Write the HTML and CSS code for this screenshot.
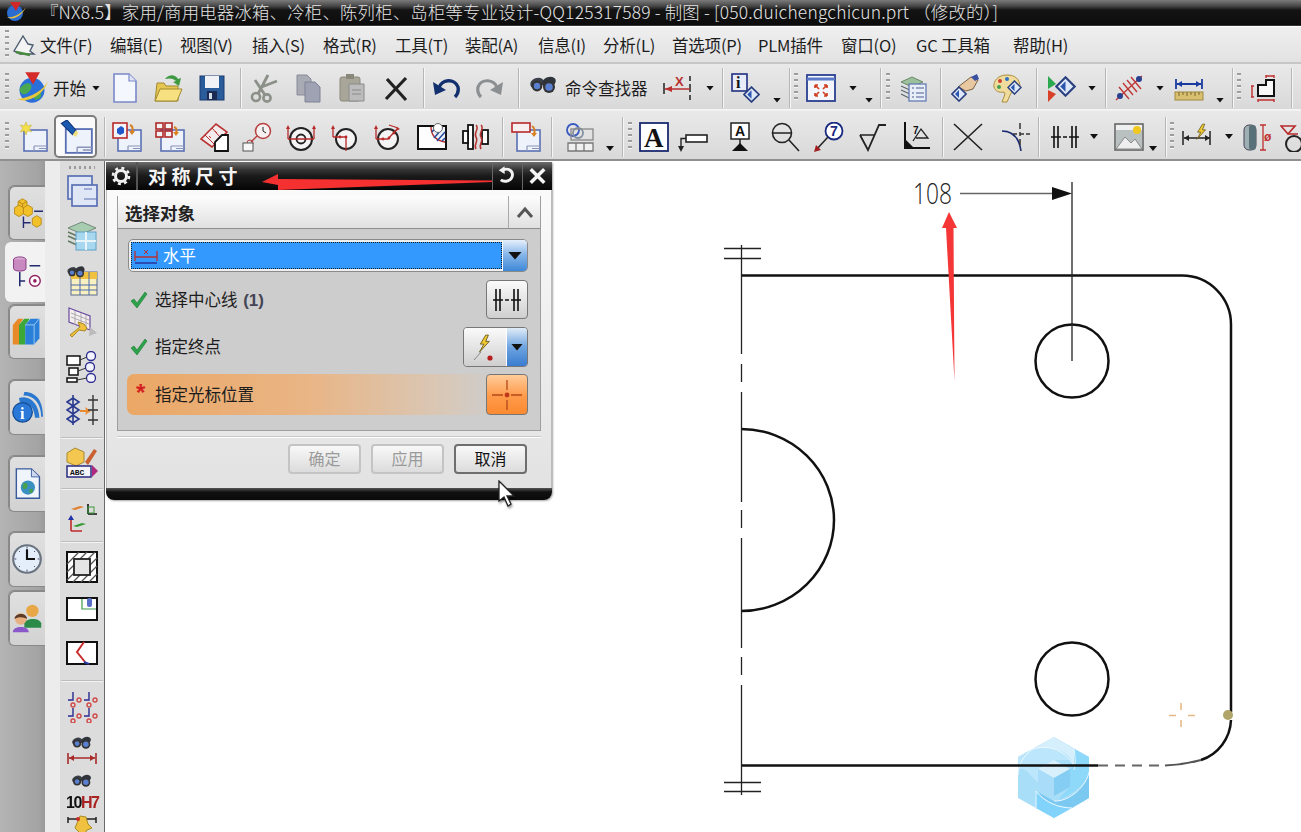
FILE: index.html
```html
<!DOCTYPE html>
<html lang="zh">
<head>
<meta charset="utf-8">
<title>NX 8.5 制图</title>
<link rel="stylesheet" href="styles.css">
</head>
<body>
<svg class="defs" width="0" height="0">
  <defs>
    <symbol id="sheet" viewBox="0 0 30 30"><rect x="6" y="8" width="23" height="21" fill="#eef2fb" stroke="#5b70b4" stroke-width="1.6"/><path d="M16 24h13M16 24v5M21 26.5h8" stroke="#8a94b8" stroke-width="1.2" fill="none"/></symbol>
    <symbol id="bino" viewBox="0 0 30 30"><ellipse cx="9" cy="10" rx="7" ry="5" fill="#3b3f4a" transform="rotate(-20 9 10)"/><ellipse cx="21" cy="9" rx="7" ry="5" fill="#2f333c" transform="rotate(-20 21 9)"/><circle cx="9" cy="13" r="5.4" fill="#333"/><circle cx="21" cy="14" r="6" fill="#333"/><circle cx="9" cy="13" r="3.2" fill="#5b7fd0"/><circle cx="21" cy="14" r="3.8" fill="#5b7fd0"/></symbol>
    <symbol id="diamond" viewBox="0 0 16 16"><path d="M8 1l7 7-7 7-7-7z" fill="#dfe8f8" stroke="#2a3f80" stroke-width="1.6"/><path d="M8 4v8L4 8z" fill="#2a56b0"/></symbol>
    <symbol id="centre" viewBox="0 0 30 30"><path d="M4 4v22M8 4v22M22 4v22M26 4v22" stroke="#111" stroke-width="1.6"/><path d="M1 15h10M13 15h4M19 15h10" stroke="#111" stroke-width="1.4"/></symbol>
    <symbol id="bolt" viewBox="0 0 20 24"><path d="M13 1L7 11h4L6 20l11-12h-4l3-7z" fill="#f0c830" stroke="#6a5a20" stroke-width="1"/></symbol>
  </defs>
</svg>

<div class="app">
  <header class="titlebar">
    <svg class="t-logo" width="24" height="22" viewBox="0 0 24 22"><circle cx="11" cy="12" r="8" fill="#2a6cd0"/><path d="M3 16c6 4 15-1 19-10-4 6-11 11-19 10z" fill="#e8c040"/><path d="M6 1h11l-5 9z" fill="#d02828"/></svg>
    <span class="t-text">『NX8.5】家用/商用电器冰箱、冷柜、陈列柜、岛柜等专业设计-QQ125317589 - 制图 - [050.duichengchicun.prt （修改的）]</span>
  </header>

  <nav class="menubar">
    <span class="grip m-5"></span>
    <svg class="m-logo" width="26" height="24" viewBox="0 0 26 24"><path d="M3 18L12 3l5 8 5 1-3 6 4 3H9z" fill="#f4f4f4" stroke="#4a5a70" stroke-width="1.4"/><path d="M5 19l14 3" stroke="#4a8a40" stroke-width="2.4"/></svg>
    <span class="mi w70">文件(F)</span><span class="mi w70">编辑(E)</span><span class="mi w72">视图(V)</span><span class="mi w71">插入(S)</span><span class="mi w72">格式(R)</span><span class="mi w70">工具(T)</span><span class="mi w73">装配(A)</span><span class="mi w65">信息(I)</span><span class="mi w69">分析(L)</span><span class="mi w86">首选项(P)</span><span class="mi w83">PLM插件</span><span class="mi w75">窗口(O)</span><span class="mi w97">GC 工具箱</span><span class="mi">帮助(H)</span>
  </nav>

  <div class="toolbar tb1">
    <span class="grip m-5"></span>
    <svg class="ic big m-6" viewBox="0 0 30 30"><circle cx="15" cy="17" r="11" fill="#2a70d8"/><path d="M8 12c4-3 8 0 6 4s-7 6-9 3 0-5 3-7zM18 20c3-2 6-1 5 2s-5 4-6 2 0-3 1-4z" fill="#4aa850"/><path d="M2 25C12 29 26 20 29 9c-4 8-14 14-27 16z" fill="#e6c63c"/><path d="M9 1h13l-6 11z" fill="#d42a2a"/></svg>
    <span class="tx w33 m-4">开始</span>
    <span class="caret m-6"></span>
    <svg class="ic m-10" viewBox="0 0 30 30"><path d="M4 1h15l7 7v21H4z" fill="#f5f7ff" stroke="#7a88c8" stroke-width="1.6"/><path d="M19 1v7h7" fill="#dfe4f6" stroke="#7a88c8" stroke-width="1.2"/></svg>
    <svg class="ic m-13" viewBox="0 0 30 30"><path d="M2 28L4 10h7l2 3h12v15z" fill="#e6c650" stroke="#a08a30"/><path d="M2 28l5-12h22l-5 12z" fill="#f6e080" stroke="#a08a30"/><path d="M12 6c4-5 10-5 13 0l3-1-2 8-6-4 3-1c-3-3-7-3-11-2z" fill="#3e9a40"/></svg>
    <svg class="ic m-14" viewBox="0 0 30 30"><rect x="3" y="3" width="24" height="24" fill="#2a5c9c" stroke="#1a3a70"/><rect x="8" y="3" width="14" height="12" fill="#f0f2f8"/><rect x="10" y="18" width="10" height="9" fill="#1a2a50"/><rect x="12" y="20" width="3" height="6" fill="#d8dcea"/></svg>
    <span class="sep m-13"></span>
    <svg class="ic m-8" viewBox="0 0 30 30"><circle cx="7" cy="24" r="4" fill="none" stroke="#8b9188" stroke-width="2.6"/><circle cx="18" cy="25" r="3.6" fill="none" stroke="#8b9188" stroke-width="2.6"/><path d="M9 21L19 2M16 22L6 7M10 15l18-7" stroke="#8b9188" stroke-width="2.8" fill="none"/></svg>
    <svg class="ic m-14" viewBox="0 0 30 30"><path d="M4 2h10l4 4v16H4z" fill="#a8aab4" stroke="#888c98"/><path d="M12 9h10l5 5v15H12z" fill="#9ea2b2" stroke="#7e8496"/></svg>
    <svg class="ic m-14" viewBox="0 0 30 30"><rect x="3" y="4" width="20" height="24" rx="2" fill="#a8a698" stroke="#8a887a"/><rect x="9" y="1" width="8" height="5" fill="#8a887a"/><path d="M12 11h15v17H12z" fill="#bcbcbc" stroke="#8a8a8a"/><path d="M15 17h9M15 21h9" stroke="#8a8a8a"/></svg>
    <svg class="ic m-14" viewBox="0 0 30 30"><path d="M6 6l19 21M25 5L5 26" stroke="#222" stroke-width="3.2"/></svg>
    <span class="sep m-12"></span>
    <svg class="ic m-7" viewBox="0 0 30 30"><path d="M8 15C10 6 24 5 27 14c1 5-1 8-3 10" fill="none" stroke="#12306e" stroke-width="3.4"/><path d="M2 9l2 13 11-5z" fill="#12306e"/></svg>
    <svg class="ic m-14" viewBox="0 0 30 30"><path d="M22 15C20 6 6 5 3 14c-1 5 1 8 3 10" fill="none" stroke="#8c8f92" stroke-width="3.2"/><path d="M28 9l-2 13-11-5z" fill="#8c8f92"/></svg>
    <span class="sep m-13"></span>
    <svg class="ic m-9"><use href="#bino"/></svg>
    <span class="tx w85 m-7">命令查找器</span>
    <svg class="ic m-12" viewBox="0 0 30 30"><path d="M28 3v5M28 11v8M28 22v5M2 10v11" stroke="#222" stroke-width="1.5"/><path d="M3 16h25" stroke="#b83030" stroke-width="1.5"/><path d="M3 16l7-3v6z" fill="#b83030"/><text class="svg-x" x="13" y="13">X</text></svg>
    <span class="caret m-14"></span>
    <span class="sep m-8"></span>
    <svg class="ic m-7" viewBox="0 0 30 30"><rect x="2" y="1" width="15" height="17" fill="#e8ecf8" stroke="#1f2f80" stroke-width="1.6"/><text class="svg-i" x="6" y="15">i</text><use href="#diamond" x="13" y="13" width="17" height="17"/></svg>
    <span class="caret low m-13"></span>
    <span class="sep m-8"></span>
    <span class="grip m-4"></span>
    <svg class="ic m-8" viewBox="0 0 30 30"><rect x="1" y="2" width="28" height="26" fill="#f4f6fc" stroke="#2a3f90" stroke-width="1.8"/><path d="M1 6h28" stroke="#5a7ac8" stroke-width="3"/><path d="M9 12l4 4M9 12v3M9 12h3M21 12l-4 4M21 12v3M21 12h-3M9 23l4-4M9 23v-3M9 23h3M21 23l-4-4M21 23v-3M21 23h-3" stroke="#d04020" stroke-width="1.7" fill="none"/></svg>
    <span class="caret m-13"></span>
    <span class="caret low m-8"></span>
    <span class="sep m-7"></span>
    <span class="grip m-5"></span>
    <svg class="ic m-8" viewBox="0 0 30 30"><path d="M3 9l11-5 11 5-11 5z" fill="#9cc09c" stroke="#6a8a6a"/><path d="M3 13l11 5M3 17l11 5M3 21l8 4" stroke="#5a6a70" stroke-width="1.3"/><rect x="11" y="11" width="17" height="17" fill="#e8eef8" stroke="#5a74b0" stroke-width="1.2"/><path d="M14 15h2M18 15h8M14 20h2M18 20h8M14 24h2M18 24h8" stroke="#4a5a90"/></svg>
    <span class="sep m-12"></span>
    <svg class="ic m-9" viewBox="0 0 30 30"><path d="M8 14L21 4l7 3-5 9-7 2z" fill="#e8c8a0" stroke="#7a6040"/><path d="M21 4l6-3 2 5-4 2z" fill="#3a50a0"/><use href="#diamond" x="1" y="13" width="16" height="16"/></svg>
    <svg class="ic m-12" viewBox="0 0 30 30"><path d="M15 2C6 2 1 8 2 14c1 4 5 6 10 5l1 2-3 8h5l4-9 9-6C28 6 23 2 15 2z" fill="#f0dc9c" stroke="#a89040"/><circle cx="8" cy="8" r="2" fill="#d04030"/><circle cx="15" cy="6" r="2" fill="#3070c0"/><circle cx="7" cy="14" r="2" fill="#40a050"/><use href="#diamond" x="15" y="7" width="15" height="15"/></svg>
    <span class="sep m-14"></span>
    <svg class="ic m-9" viewBox="0 0 30 30"><path d="M2 3l8 8-8 5z" fill="#2ca850"/><path d="M2 17l8 4-8 8z" fill="#d84028"/><use href="#diamond" x="9" y="3" width="21" height="21"/></svg>
    <span class="caret m-12"></span>
    <span class="sep m-9"></span>
    <svg class="ic m-8" viewBox="0 0 30 30"><path d="M2 27L28 3M5 14l10 12M9 10l10 12M13 7l10 12M17 4l10 12" stroke="#c03838" stroke-width="1.4"/><circle cx="25" cy="6" r="3" fill="#2a3f90"/><circle cx="6" cy="23" r="3" fill="#2a3f90"/></svg>
    <span class="caret m-12"></span>
    <svg class="ic m-10" viewBox="0 0 30 30"><path d="M2 6v10M28 6v10M3 11h24" stroke="#1a3aa0" stroke-width="1.8"/><path d="M3 11l5-3v6zM27 11l-5-3v6z" fill="#1a3aa0"/><rect x="1" y="19" width="28" height="8" fill="#d8c070" stroke="#a08a40"/><path d="M5 19v4M9 19v3M13 19v4M17 19v3M21 19v4M25 19v3" stroke="#7a6830"/></svg>
    <span class="caret low m-12"></span>
    <span class="sep m-8"></span>
    <span class="grip m-4"></span>
    <svg class="ic m-8" viewBox="0 0 30 30"><path d="M9 23V12h8V7h8v16z" fill="#f8f8f8" stroke="#111" stroke-width="2"/><path d="M3 13v11M2 13h3M2 24h3M17 3h8M17 2v3M25 2v3M9 27h16M9 26v3M25 26v3" stroke="#c03030" stroke-width="1.4"/></svg>
    <span class="sep m-12"></span>
  </div>

  <div class="toolbar tb2">
    <span class="grip m-5"></span>
    <svg class="ic m-9" viewBox="0 0 30 30"><use href="#sheet"/><path d="M8 0l1.6 4 4-1-2.4 3.4 2.4 3.4-4-1L8 13 6.4 8.8l-4 1L4.800 6.400 2.400 3l4 1z" fill="#f4e04a" stroke="#c0a830" stroke-width=".5"/></svg>
    <span class="active m-6"><svg class="ic big" viewBox="0 0 30 30"><use href="#sheet"/><path d="M2 3l5-3 8 9-3 4z" fill="#1a5ab0" stroke="#123a80"/><path d="M12 13l3-4 2 2-2 4z" fill="#f0e080"/></svg></span>
    <span class="sep m-7"></span>
    <svg class="ic m-7" viewBox="0 0 30 30"><use href="#sheet"/><rect x="1" y="1" width="14" height="15" fill="#f4f4f8" stroke="#b82a2a" stroke-width="1.6"/><path d="M5 7l4-3 3 2v5l-4 2-3-2z" fill="#1f58c8"/><path d="M18 3c3 1 3 4 2 7" stroke="#d88020" stroke-width="2" fill="none"/><path d="M17 9l6 0-3 4z" fill="#d88020"/></svg>
    <svg class="ic m-13" viewBox="0 0 30 30"><use href="#sheet"/><g fill="#f2f2f4" stroke="#b02828" stroke-width="1.6"><rect x="1" y="1" width="7" height="6"/><rect x="10" y="1" width="7" height="6"/><rect x="1" y="9" width="7" height="6"/><rect x="10" y="9" width="7" height="6"/></g><path d="M19 5c3 1 3 3 2 6" stroke="#d88020" stroke-width="2" fill="none"/><path d="M18 10h6l-3 4z" fill="#d88020"/></svg>
    <svg class="ic m-15" viewBox="0 0 30 30"><path d="M1 17L16 2l11 8-15 15z" fill="#f4ecec" stroke="#b83030" stroke-width="1.6"/><path d="M9 14l2 2M15 9l2 2M5 13l9 9M12 6l8 9" stroke="#b83030"/><path d="M15 29v-9l7-7h6v16z" fill="#fff" stroke="#111" stroke-width="1.8"/></svg>
    <svg class="ic m-12" viewBox="0 0 30 30"><circle cx="21" cy="9" r="7.5" fill="#f6f0f0" stroke="#b84040" stroke-width="1.5"/><path d="M21 5v4l3 2" stroke="#222" fill="none"/><path d="M15 14l-6 6" stroke="#b84040" stroke-width="1.4"/><circle cx="8" cy="21" r="3" fill="none" stroke="#b84040"/><rect x="1" y="21" width="10" height="8" fill="#f6f6f6" stroke="#555"/></svg>
    <svg class="ic m-14" viewBox="0 0 30 30"><circle cx="15" cy="17" r="11" fill="#f4f4f4" stroke="#222" stroke-width="2"/><circle cx="15" cy="17" r="4.500" fill="none" stroke="#222" stroke-width="1.8"/><path d="M2 17h26M2 17V5M28 17V5" stroke="#b82a2a" stroke-width="1.3" fill="none"/><path d="M2 3l2 4H0zM28 3l2 4h-4z" fill="#b82a2a"/></svg>
    <svg class="ic m-14" viewBox="0 0 30 30"><circle cx="16" cy="17" r="10" fill="#f4f4f4" stroke="#222" stroke-width="2"/><path d="M3 15h13v14M3 15V5" stroke="#b82a2a" stroke-width="1.3" fill="none"/><path d="M3 3l2 4H1z" fill="#b82a2a"/><circle cx="10" cy="15" r="1.400" fill="#b82a2a"/><circle cx="16" cy="15" r="1.400" fill="#b82a2a"/></svg>
    <svg class="ic m-13" viewBox="0 0 30 30"><circle cx="15" cy="17" r="10" fill="#f4f4f4" stroke="#222" stroke-width="2"/><path d="M3 17h12l9-10M3 17V5M16 3l9 3" stroke="#b82a2a" stroke-width="1.3" fill="none"/><path d="M3 3l2 4H1zM27 7l-4 2 1-4z" fill="#b82a2a"/><circle cx="10" cy="17" r="1.400" fill="#b82a2a"/><circle cx="16" cy="16" r="1.400" fill="#b82a2a"/><circle cx="21" cy="11" r="1.400" fill="#b82a2a"/></svg>
    <svg class="ic m-14" viewBox="0 0 30 30"><rect x="1" y="4" width="28" height="23" fill="#fdfdfd" stroke="#111" stroke-width="2"/><path d="M14 5c0 9 6 14 14 15V5z" fill="#eef2fa"/><path d="M14 5c0 9 6 14 14 15" fill="none" stroke="#b82a2a" stroke-width="1.4"/><path d="M17 16l7-8M20 19l8-9M15 10l4-5M25 19l3-3" stroke="#2a4fa0" stroke-width="1.6"/><circle cx="21" cy="6" r="4.500" fill="#fff" stroke="#666"/></svg>
    <svg class="ic m-13" viewBox="0 0 30 30"><rect x="8" y="3" width="5" height="24" fill="#fff" stroke="#111" stroke-width="1.8"/><rect x="3" y="9" width="5" height="12" fill="#fff" stroke="#111" stroke-width="1.8"/><rect x="22" y="8" width="6" height="14" fill="#fff" stroke="#111" stroke-width="1.800"/><path d="M16 3c4 4-3 8 0 12s-3 8 0 12M21 3c4 4-3 8 0 12s-3 8 0 12" stroke="#b83030" stroke-width="1.5" fill="none"/></svg>
    <span class="sep m-12"></span>
    <svg class="ic m-8" viewBox="0 0 30 30"><use href="#sheet"/><rect x="1" y="1" width="18" height="9" fill="#f6f0f0" stroke="#b82a2a" stroke-width="1.600"/><path d="M21 4c3 2 3 5 2 8" stroke="#d88020" stroke-width="2" fill="none"/><path d="M20 11h6l-3 4z" fill="#d88020"/></svg>
    <span class="sep m-10"></span>
    <svg class="ic m-13" viewBox="0 0 30 30"><circle cx="8" cy="8" r="6" fill="none" stroke="#3a5ac0" stroke-width="1.800"/><circle cx="13" cy="11" r="5" fill="none" stroke="#8090a0" stroke-width="1.800"/><rect x="6" y="7" width="22" height="11" fill="none" stroke="#888" stroke-width="1.300"/><path d="M3 21h25v8H3zM11 21v8M19 21v8" fill="#f0f0f0" stroke="#777" stroke-width="1.300"/></svg>
    <span class="caret low m-11"></span>
    <span class="sep m-8"></span>
    <span class="grip m-5"></span>
    <svg class="ic m-7" viewBox="0 0 30 30"><rect x="1" y="1" width="28" height="28" fill="#fff" stroke="#1a2a70" stroke-width="1.800"/><text class="svg-a" x="5" y="25">A</text></svg>
    <svg class="ic m-9" viewBox="0 0 30 30"><rect x="8" y="13" width="21" height="7" fill="#fff" stroke="#222" stroke-width="1.600"/><path d="M8 16.500H3V27" stroke="#222" stroke-width="1.400" fill="none"/><path d="M0 24h6l-3 6z" fill="#222"/></svg>
    <svg class="ic m-17" viewBox="0 0 30 30"><rect x="6" y="1" width="18" height="16" fill="#fff" stroke="#222" stroke-width="1.500"/><text class="svg-sm" x="10" y="14">A</text><path d="M15 17v5" stroke="#222" stroke-width="1.500"/><path d="M7 29l8-8 8 8z" fill="#111"/></svg>
    <svg class="ic m-15" viewBox="0 0 30 30"><circle cx="12" cy="11" r="9.500" fill="none" stroke="#222" stroke-width="1.600"/><path d="M3 11h18M19 18l10 11" stroke="#222" stroke-width="1.600"/></svg>
    <svg class="ic m-14" viewBox="0 0 30 30"><circle cx="20" cy="9" r="8.500" fill="#fff" stroke="#1a2a80" stroke-width="1.800"/><text class="svg-7" x="16" y="14">7</text><path d="M14 15L2 28" stroke="#222" stroke-width="1.500"/><path d="M0 30l2-7 5 5z" fill="#a02020"/></svg>
    <svg class="ic m-13" viewBox="0 0 30 30"><path d="M3 13l8 15L22 3h7" fill="none" stroke="#222" stroke-width="1.800"/><path d="M3 13h15" stroke="#222" stroke-width="1.500"/></svg>
    <svg class="ic m-14" viewBox="0 0 30 30"><path d="M4 0v26h25" fill="none" stroke="#111" stroke-width="2"/><path d="M12 19L20 7l7 9H15" fill="none" stroke="#222" stroke-width="1.300"/><path d="M4 26V17l9 9z" fill="#111"/><text class="svg-t" x="12" y="12">7</text></svg>
    <span class="sep m-11"></span>
    <svg class="ic m-10" viewBox="0 0 30 30"><path d="M1 2l28 26M29 2L1 28" stroke="#222" stroke-width="1.600"/></svg>
    <svg class="ic m-18" viewBox="0 0 30 30"><path d="M1 9c10 0 17 6 19 20" fill="none" stroke="#1a2a70" stroke-width="1.600"/><path d="M19 1v6M19 10v4M19 17v6M12 12h4M19 12h4M25 12h4" stroke="#333" stroke-width="1.500"/></svg>
    <span class="sep m-7"></span>
    <svg class="ic m-11"><use href="#centre"/></svg>
    <span class="caret m-10"></span>
    <svg class="ic m-16" viewBox="0 0 30 30"><rect x="1" y="2" width="28" height="26" fill="#eef0f0" stroke="#666" stroke-width="1.600"/><path d="M2 8h26v19H2z" fill="#b8c0c0"/><path d="M2 27l9-12 6 6 4-4 7 10z" fill="#eee" stroke="#888"/><circle cx="23" cy="8" r="4" fill="#f0c820"/></svg>
    <span class="caret low m-5"></span>
    <span class="sep m-8"></span>
    <span class="grip m-4"></span>
    <svg class="ic m-8" viewBox="0 0 30 30"><path d="M1 9v14M28 9v14M2 16h26" stroke="#222" stroke-width="1.500"/><path d="M2 16l5-3v6zM28 16l-5-3v6z" fill="#222"/><use href="#bolt" x="10" y="0" width="16" height="22"/></svg>
    <span class="caret m-13"></span>
    <svg class="ic m-9" viewBox="0 0 30 30"><rect x="2" y="3" width="12" height="25" rx="5" fill="#9fb0b4" stroke="#445"/><rect x="7" y="3" width="7" height="25" rx="3" fill="#5a7078"/><path d="M18 3h6M21 3v25M18 28h6" stroke="#c03030" stroke-width="1.300"/><text class="svg-phi" x="22" y="19">ø</text></svg>
    <svg class="ic m-8" viewBox="0 0 30 30"><path d="M1 4h14L8 12zM8 12l10 0" fill="none" stroke="#b82a2a" stroke-width="1.600"/><circle cx="14" cy="22" r="8" fill="none" stroke="#222" stroke-width="2"/></svg>
  </div>

  <main class="work">
    <aside class="resbar">
      <div class="tab t1"><svg class="tab-ic" viewBox="0 0 36 36"><g fill="#f2c028" stroke="#b88a18"><path d="M8 5l5-3 5 3-5 3z"/><path d="M8 5v7l5 3V8zM18 5v7l-5 3V8z"/><path d="M4 12l5-3 5 3v7l-5 3-5-3z"/><path d="M14 12l5-3 5 3v7l-5 3-5-3z"/><path d="M24 24l5-3 5 3v7l-5 3-5-3z"/></g><path d="M14 22v13M14 29h8M26 16h10" stroke="#222a70" stroke-width="1.600" fill="none"/></svg></div>
      <div class="tab t2 on"><svg class="tab-ic" viewBox="0 0 36 36"><ellipse cx="11" cy="4" rx="7" ry="3" fill="#d8a8d0" stroke="#803080"/><path d="M4 4v10c0 4 14 4 14 0V4" fill="#c888c0" stroke="#803080"/><path d="M11 18v16M11 28h6M22 11h12" stroke="#222a70" stroke-width="1.700" fill="none"/><circle cx="28" cy="28" r="6" fill="#fff" stroke="#902060" stroke-width="1.600"/><circle cx="28" cy="28" r="2" fill="#902060"/></svg></div>
      <div class="tab t3"><svg class="tab-ic" viewBox="0 0 36 36"><path d="M2 10l6-7h6l-5 7v22H2z" fill="#e88a28"/><path d="M9 10l6-7h6l-5 7v22H9z" fill="#3ca838"/><path d="M16 10l6-7h10v22l-6 7H16z" fill="#2a80d8"/><path d="M16 10h10v22M26 10l6-7" stroke="#a8d0f0" fill="none"/></svg></div>
      <div class="tab t4"><svg class="tab-ic" viewBox="0 0 36 36"><path d="M9 8c12-4 22 6 23 22h-5C26 18 20 12 10 13zM15 1c15 0 21 12 21 28h-2C34 14 26 5 14 5z" fill="#2a78d0"/><circle cx="13" cy="24" r="11" fill="#2a78d8" stroke="#124a90" stroke-width="1.400"/><text class="svg-info" x="10" y="31">i</text></svg></div>
      <div class="tab t5"><svg class="tab-ic" viewBox="0 0 36 36"><path d="M6 1h17l9 9v24H6z" fill="#f0f4fb" stroke="#3a5a9c" stroke-width="1.600"/><path d="M23 1v9h9" fill="#cfdaf0" stroke="#3a5a9c"/><circle cx="19" cy="22" r="8" fill="#3a90c0"/><path d="M14 17c4-1 6 2 4 5s-4 2-5 0zM21 24c3-1 5 0 3 3s-4 1-3-3z" fill="#48a048"/></svg></div>
      <div class="tab t6"><svg class="tab-ic" viewBox="0 0 36 36"><circle cx="18" cy="18" r="15.500" fill="#e4eefa" stroke="#6a7480" stroke-width="2.400"/><path d="M18 7v11h9" stroke="#111" stroke-width="2.400" fill="none"/><path d="M18 4v2M18 30v2M4 18h2M30 18h2M9 9l1 1M27 9l-1 1M9 27l1-1M27 27l-1-1" stroke="#335"/></svg></div>
      <div class="tab t7"><svg class="tab-ic" viewBox="0 0 36 36"><circle cx="24" cy="10" r="7" fill="#e8a848"/><path d="M15 24c1-6 17-7 19 0v5H15z" fill="#2a8a48"/><circle cx="11" cy="19" r="6.500" fill="#e8b080"/><path d="M4 19c0-7 14-8 14 0-3-2-10-3-14 0z" fill="#5a3a28"/><path d="M2 34c0-8 18-8 18 0z" fill="#8a58c8"/></svg></div>
    </aside>
    <div class="strip"></div>
    <aside class="sidetools">
      <span class="hgrip"></span>
      <svg class="sic mt-6" viewBox="0 0 32 32"><rect x="2" y="1" width="24" height="23" fill="#dfe6f6" stroke="#5a70b4" stroke-width="1.700"/><rect x="6" y="10" width="25" height="21" fill="#dfe6f6" stroke="#5a70b4" stroke-width="1.700"/><path d="M18 24h13M18 14h8" stroke="#5a70b4"/></svg>
      <svg class="sic mt-13" viewBox="0 0 32 32"><path d="M2 8l14-6 14 6-14 6z" fill="#a8ccb0" stroke="#708a78"/><path d="M2 12l9 4M2 16l9 4M2 21l9 4" stroke="#607a60" stroke-width="1.500"/><rect x="10" y="12" width="20" height="18" fill="#a8d8f0" stroke="#60a0c8"/><path d="M20 12v18M10 21h20" stroke="#e8f4fa" stroke-width="2"/></svg>
      <svg class="sic mt-12" viewBox="0 0 32 32"><rect x="5" y="8" width="26" height="23" fill="#f8f0c0" stroke="#5a6a90"/><rect x="5" y="8" width="26" height="7" fill="#f0c040"/><path d="M5 21h26M5 26h26M14 8v23M23 8v23" stroke="#4a6ab0"/><use href="#bino" x="0" y="0" width="20" height="20"/></svg>
      <svg class="sic mt-11" viewBox="0 0 32 32"><path d="M3 1l21 8v14L3 15z" fill="#f4f0f0" stroke="#6a4aa0" stroke-width="1.200"/><path d="M5 6l18 7M5 10l18 7M9 4v14M15 6v14M20 8v14" stroke="#b0a8b0"/><path d="M4 28l10-8-2-5 6 2 3 4-2 3-6-1-7 7z" fill="#f0c040" stroke="#a88a20"/><path d="M24 20l7 6-8 3z" fill="#bbb"/></svg>
      <svg class="sic mt-12" viewBox="0 0 32 32"><rect x="1" y="5" width="13" height="9" fill="#fff" stroke="#111" stroke-width="1.500"/><rect x="3" y="17" width="9" height="7" fill="#fff" stroke="#111" stroke-width="1.500"/><rect x="1" y="27" width="10" height="4" fill="#fff" stroke="#111" stroke-width="1.500"/><g fill="#f4f4ff" stroke="#2a2a90" stroke-width="1.300"><circle cx="25" cy="5" r="4.500"/><circle cx="24" cy="16" r="4.500"/><circle cx="25" cy="27" r="4.500"/></g><path d="M14 9l7-3M12 20l8-3M11 29l10-2" stroke="#333"/></svg>
      <svg class="sic mt-11" viewBox="0 0 32 32"><path d="M7 1v30M1 8l6-4 6 4-6 4zM1 16l6-4 6 4-6 4zM1 25l6-4 6 4-6 4z" fill="none" stroke="#2a3a90" stroke-width="1.600"/><path d="M14 16h6l-1-3 6 4-6 4 1-3h-6z" fill="#e88a30"/><path d="M27 1v30M22 6h10M22 16h10M22 26h10" stroke="#333" stroke-width="1.400"/></svg>
      <span class="hsep mt-11"></span>
      <svg class="sic mt-8" viewBox="0 0 32 32"><path d="M1 7l8-5 9 4v10l-8 4-9-4z" fill="#f4c850" stroke="#a88a30"/><path d="M19 16l9-13 3 2-9 14z" fill="#c86030"/><rect x="1" y="20" width="24" height="11" fill="#f4f4fa" stroke="#2a2a80" stroke-width="1.500"/><text class="svg-abc" x="4" y="29">ABC</text><path d="M26 19l6 6-6 6z" fill="#b02880"/></svg>
      <span class="hsep mt-10"></span>
      <svg class="sic mt-12" viewBox="0 0 32 32"><path d="M5 30V17M5 30h11" stroke="#c02a2a" stroke-width="1.600"/><path d="M5 14l-3 5h6z" fill="#2233aa"/><path d="M7 25l9-3 4 1-9 3z" fill="#3a9a3a"/><path d="M22 13V3M22 13h9" stroke="#111" stroke-width="1.600"/><rect x="22" y="6" width="6" height="6" fill="none" stroke="#3a9a3a"/><path d="M5 8l9-3 4 1-9 3z" fill="#e08030"/></svg>
      <span class="hsep mt-8"></span>
      <svg class="sic mt-9" viewBox="0 0 32 32"><rect x="1" y="1" width="30" height="30" fill="#fff" stroke="#111" stroke-width="2"/><path d="M1 13L13 1M1 21L21 1M1 29L29 1M7 31L31 7M15 31l16-16M23 31l8-8" stroke="#555" stroke-width="1.300"/><rect x="8" y="8" width="16" height="16" fill="#e4e4e4" stroke="#222" stroke-width="1.800"/></svg>
      <svg class="sic mt-10" viewBox="0 0 32 32"><rect x="1" y="5" width="30" height="22" fill="#fff" stroke="#111" stroke-width="2"/><path d="M16 6v10h14" stroke="#3a9a4a" fill="none" stroke-width="1.200"/><rect x="21" y="5" width="5" height="9" rx="2" fill="#5a70c8"/></svg>
      <svg class="sic mt-12" viewBox="0 0 32 32"><rect x="1" y="5" width="30" height="22" fill="#fff" stroke="#111" stroke-width="2"/><path d="M18 5l-7 10 8 10" fill="none" stroke="#c82a2a" stroke-width="2"/><path d="M18 25l5 2" stroke="#2a3aa0" stroke-width="2"/></svg>
      <span class="hsep mt-11"></span>
      <svg class="sic mt-10" viewBox="0 0 32 32"><g fill="none" stroke-width="1.400"><path d="M7 1v8H2M23 1v8h-5M7 17v8H2M23 17v8h-5" stroke="#2a2a90"/><g stroke="#d04a4a"><circle cx="13" cy="9" r="2"/><circle cx="29" cy="9" r="2"/><circle cx="13" cy="25" r="2"/><circle cx="29" cy="25" r="2"/><circle cx="7" cy="14" r="2"/><circle cx="23" cy="14" r="2"/><circle cx="7" cy="30" r="2"/><circle cx="23" cy="30" r="2"/></g></g></svg>
      <svg class="sic mt-11" viewBox="0 0 32 32"><use href="#bino" x="3" y="0" width="25" height="22"/><path d="M2 19v11M30 19v11M3 24h26" stroke="#a82a2a" stroke-width="1.600"/><path d="M3 24l5-3v6zM29 24l-5-3v6z" fill="#a82a2a"/></svg>
      <svg class="sic tall mt-8" viewBox="0 0 36 40"><use href="#bino" x="5" y="-2" width="25" height="22"/><text class="svg-10" x="2" y="34">10</text><text class="svg-h7" x="17" y="34">H7</text></svg>
      <svg class="sic" viewBox="0 0 32 32"><path d="M2 5h28M2 3v6M30 3v6" stroke="#222" stroke-width="1.500"/><path d="M9 14l5-12 6 1 2 7 4 4-5 2-4 6z" fill="#f0c040" stroke="#a88a20"/><circle cx="12" cy="5" r="2" fill="#c82a2a"/></svg>
    </aside>

    <section class="canvas">
      <svg class="drawing" viewBox="105 161 1196 671" width="1196" height="671">
        <g class="wm">
          <path d="M1054 737L1089 757V798L1054 818L1018 798V757Z" fill="#a9def9"/>
          <path d="M1054 737L1074 749V766C1070 750 1050 745 1033 749Z" fill="#d6effd"/>
          <path d="M1033 749C1045 746 1062 748 1070 760L1054 760L1038 769V783C1030 775 1024 765 1018 770V757Z" fill="#bce6fb"/>
          <path d="M1074 749L1089 757V772C1087 782 1075 794 1058 800L1070 787V769L1074 766Z" fill="#8ed8f9"/>
          <path d="M1089 772V798L1072 808C1060 808 1045 802 1036 791L1054 801C1070 800 1085 788 1089 772Z" fill="#7bc9f1"/>
          <path d="M1035 791C1045 803 1060 806 1072 808L1054 818L1036 808Z" fill="#82d3fb"/>
          <path d="M1074 749C1076 760 1075 766 1074 770M1033 749C1045 745 1065 748 1074 766M1018 775C1018 765 1024 755 1033 749M1089 772C1087 785 1070 802 1054 801M1036 791C1045 803 1060 808 1072 808M1036 791V808" fill="none" stroke="#eef9ff" stroke-width="1"/>
          <path d="M1054 760L1070 769L1054 778L1038 769Z" fill="#d8f0fc"/>
          <path d="M1054 778L1070 769V787L1054 796Z" fill="#85cdf2"/>
          <path d="M1054 778L1038 769V787L1054 796Z" fill="#a9dcf8"/>
        </g>
        <g class="thick">
          <path d="M741 275.500H1182A49 49 0 0 1 1231 325V712"/>
          <path d="M1231 720A44 44 0 0 1 1201 760"/>
          <path d="M741 765.500H1098"/>
          <circle cx="1072" cy="361" r="36.500"/>
          <circle cx="1072" cy="679" r="36.500"/>
          <path d="M741 429A93 91 0 0 1 741 611"/>
        </g>
        <path class="fade dashy" d="M1098 765.500H1165"/>
        <path class="fade" d="M1165 765.500C1180 765 1190 763 1201 760"/>
        <g class="thin">
          <path d="M741.500 245V354M741.500 364V382M741.500 392V502M741.500 510V528M741.500 538V648M741.500 657V675M741.500 685V795"/>
          <path d="M724 248.500H761M724 258.500H761M724 782.500H761M724 791.500H761"/>
          <path d="M1072 182V361"/>
        </g>
        <path class="dimline" d="M960 193.500H1054"/>
        <path d="M1052 187L1072 193.500L1052 200Z" fill="#111"/>
        <text class="dim108" x="913" y="204" textLength="39" lengthAdjust="spacingAndGlyphs">108</text>
        <path class="redarrow" d="M949 212L957 228H953.500L954.500 381L946 228H942Z"/>
        <path class="cross" d="M1181 703V710M1181 720V727M1169 715.500H1176M1188 715.500H1195"/>
        <circle cx="1228" cy="715" r="5" fill="#b0a468"/>
      </svg>
    </section>

    <div class="dialog">
      <div class="d-title">
        <svg class="d-gear" width="20" height="20" viewBox="0 0 20 20"><circle cx="10" cy="10" r="5.500" fill="none" stroke="#f0f0f0" stroke-width="3"/><circle cx="10" cy="10" r="8" fill="none" stroke="#f0f0f0" stroke-width="2.600" stroke-dasharray="3 3.300"/></svg>
        <span class="d-name">对称尺寸</span>
        <svg class="d-act" width="30" height="28" viewBox="0 0 30 28"><path d="M10 8c6-3 11 1 10 6s-8 7-12 4" fill="none" stroke="#f2f2f2" stroke-width="3"/><path d="M12 4v8l-6-4z" fill="#f2f2f2"/></svg>
        <svg class="d-act" width="30" height="28" viewBox="0 0 30 28"><path d="M8 7l14 14M22 7L8 21" stroke="#f4f4f4" stroke-width="3.600"/></svg>
        <svg class="d-arrow" width="232" height="16" viewBox="0 0 232 16"><path d="M0 8L16 0V5L230 6.500V8L16 16V11Z" fill="#f43030"/></svg>
      </div>
      <div class="d-main">
        <section class="panel">
          <div class="p-head"><span class="p-title">选择对象</span><span class="p-fold"><svg width="18" height="12" viewBox="0 0 18 12"><path d="M2 11l7-8 7 8" fill="none" stroke="#555" stroke-width="3"/></svg></span></div>
          <div class="p-body">
            <div class="combo">
              <div class="combo-val"><svg width="24" height="18" viewBox="0 0 24 18"><path d="M1 4v10M23 4v10M1 10h22" stroke="#b83030" stroke-width="1.300"/><path d="M10 3l4 4M14 3l-4 4" stroke="#b83030"/><path d="M1 16h22" stroke="#2a3aa0" stroke-width="1.600"/></svg><span class="lift">水平</span></div>
              <div class="combo-btn"><i class="combo-caret"></i></div>
            </div>
            <div class="row r1">
              <svg class="chk" width="18" height="18" viewBox="0 0 18 18"><path d="M1 10l3-2 3 4 8-11 2 2-10 14z" fill="#2ea24a" stroke="#1a7a30" stroke-width=".6"/></svg>
              <span class="r-label">选择中心线 <b class="cnt">(1)</b></span>
              <span class="sq"><svg width="30" height="30"><use href="#centre"/></svg></span>
            </div>
            <div class="row r2">
              <svg class="chk" width="18" height="18" viewBox="0 0 18 18"><path d="M1 10l3-2 3 4 8-11 2 2-10 14z" fill="#2ea24a" stroke="#1a7a30" stroke-width=".6"/></svg>
              <span class="r-label">指定终点</span>
              <span class="split"><span class="split-a"><svg width="28" height="30" viewBox="0 0 28 30"><use href="#bolt" x="3" y="2" width="18" height="22"/><path d="M3 28L10 20" stroke="#888"/><circle cx="19" cy="26" r="2.600" fill="#b81c1c"/></svg></span><span class="split-b"><i class="combo-caret"></i></span></span>
            </div>
            <div class="row r3">
              <span class="star">*</span>
              <span class="r-label">指定光标位置</span>
              <span class="sq hot"><svg width="36" height="36" viewBox="0 0 36 36"><path d="M18 3v10M18 23v10M3 18h11M22 18h11" stroke="#b5471a" stroke-width="1.300"/><circle cx="18" cy="18" r="2.400" fill="#c0391a"/></svg></span>
            </div>
          </div>
        </section>
        <div class="d-rule"></div>
        <div class="d-foot">
          <button class="btn off">确定</button>
          <button class="btn off">应用</button>
          <button class="btn def">取消</button>
        </div>
      </div>
      <div class="d-bottom"></div>
      <svg class="pointer" width="20" height="28" viewBox="0 0 20 28"><path d="M2 1V21L7 17L11 26L14 24L10 16H17Z" fill="#fff" stroke="#222" stroke-width="1.300"/></svg>
    </div>
  </main>
</div>
</body>
</html>
```
FILE: styles.css
```css
* { box-sizing: border-box; }
html, body { margin: 0; padding: 0; background: #fff; }
body { width: 1301px; height: 832px; overflow: hidden; font-family: "Noto Sans CJK SC", "Noto Sans", sans-serif; color: #111; }
.defs { position: absolute; }
.app { width: 1301px; height: 832px; display: flex; flex-direction: column; overflow: hidden; filter: blur(.4px); }

/* title */
.titlebar { height: 26px; flex: none; display: flex; align-items: center; padding-left: 4px; padding-bottom: 2px; background: linear-gradient(#7b7b7b 0, #474747 6px, #141414 10px, #0c0c0c 100%); color: #e4e4e4; white-space: nowrap; border-bottom: 1px solid #333; }
.t-logo { flex: none; }
.t-text { font-size: 17.400px; margin-left: 13px; letter-spacing: .2px; font-weight: 300; }

/* menu */
.menubar { height: 38px; flex: none; display: flex; align-items: center; background: linear-gradient(#efefef, #e2e2e2); border-top: 1px solid #fff; border-bottom: 2px solid #c6c6c6; }
.m-logo { margin-left: 2px; flex: none; width: 26px; margin-right: 3px; }
.mi { font-size: 16.500px; color: #1c1c1c; white-space: nowrap; flex: none; letter-spacing: -.2px; }
.w65 { width: 65px; } .w69 { width: 69px; } .w70 { width: 70px; } .w71 { width: 71px; } .w72 { width: 72px; } .w73 { width: 73px; } .w75 { width: 75px; } .w83 { width: 83px; } .w86 { width: 86px; } .w97 { width: 97px; }

/* toolbars */
.toolbar { flex: none; display: flex; align-items: center; overflow: hidden; background: linear-gradient(#e9e9e9, #d9d9d9); white-space: nowrap; }
.tb1 { height: 47px; padding-top: 3px; border-bottom: 2px solid #f2f2f2; }
.tb2 { height: 50px; padding-top: 3px; border-bottom: 2px solid #8f8f8f; }
.ic { width: 30px; height: 30px; flex: none; display: block; }
.ic.big { width: 34px; height: 34px; }
.grip { flex: none; width: 4px; height: 30px; background: repeating-linear-gradient(#9c9c9c 0 2px, #f4f4f4 2px 3px, transparent 3px 6px); }
.sep { flex: none; width: 1px; height: 40px; background: #b6b6b6; box-shadow: 1px 0 0 #f6f6f6; }
.caret { flex: none; width: 8px; height: 5px; background: #111; clip-path: polygon(0 0, 100% 0, 50% 100%); }
.caret.low { margin-top: 24px; }
.tx { flex: none; font-size: 16.500px; line-height: 20px; color: #1c1c1c; }
.w33 { width: 33px; } .w85 { width: 85px; }
.active { flex: none; width: 43px; height: 43px; display: flex; align-items: center; justify-content: center; border: 2px solid #7c7c7c; border-radius: 5px; background: #fafafa; }
.m-4 { margin-left: 4px; } .m-5 { margin-left: 5px; } .m-6 { margin-left: 6px; } .m-7 { margin-left: 7px; } .m-8 { margin-left: 8px; } .m-9 { margin-left: 9px; } .m-10 { margin-left: 10px; } .m-11 { margin-left: 11px; } .m-12 { margin-left: 12px; } .m-13 { margin-left: 13px; } .m-14 { margin-left: 14px; } .m-15 { margin-left: 15px; } .m-16 { margin-left: 16px; } .m-17 { margin-left: 17px; } .m-18 { margin-left: 18px; }

/* svg labels */
.svg-x { font: 700 13px "Liberation Sans", sans-serif; fill: #b83030; }
.svg-i { font: 700 16px "Liberation Serif", serif; fill: #111; }
.svg-a { font: 700 27px "Liberation Serif", serif; fill: #111; }
.svg-sm { font: 700 14px "Liberation Sans", sans-serif; fill: #111; }
.svg-7 { font: 700 14px "Liberation Sans", sans-serif; fill: #1a2a80; }
.svg-t { font: 700 10px "Liberation Sans", sans-serif; fill: #111; }
.svg-phi { font: 700 12px "Liberation Sans", sans-serif; fill: #c03030; }
.svg-info { font: 700 19px "Liberation Serif", serif; fill: #fff; }
.svg-abc { font: 700 8px "Liberation Mono", monospace; fill: #111; }
.svg-10 { font: 700 16px "Liberation Sans", sans-serif; fill: #111; letter-spacing: -1.500px; }
.svg-h7 { font: 700 16px "Liberation Sans", sans-serif; fill: #a82222; letter-spacing: -1.500px; }

/* workspace */
.work { flex: 1; display: flex; position: relative; min-height: 0; }
.resbar { width: 45px; flex: none; background: linear-gradient(90deg, #b4b4b4, #a4a4a4 85%, #9a9a9a); display: flex; flex-direction: column; align-items: flex-end; }
.tab { width: 37px; background: linear-gradient(#e0e0e0, #d2d2d2); border: 1px solid #8a8a8a; border-right: 0; border-radius: 6px 0 0 6px; display: flex; align-items: center; justify-content: center; box-shadow: 1px 1px 0 #888 inset; overflow: hidden; }
.tab-ic { width: 32px; height: 32px; flex: none; }
.t1 { margin-top: 24px; height: 55px; }
.t2 { margin-top: 2px; height: 60px; }
.t3 { margin-top: 2px; height: 55px; }
.t4 { margin-top: 20px; height: 56px; }
.t5 { margin-top: 20px; height: 57px; }
.t6 { margin-top: 19px; height: 56px; }
.t7 { margin-top: 3px; height: 56px; }
.tab.on { width: 40px; background: #f2f2f2; border-color: #f2f2f2; box-shadow: none; }
.strip { width: 15px; flex: none; background: #ececec; }
.sidetools { width: 45px; flex: none; background: #dcdcdc; border-right: 1px solid #6a6a6a; display: flex; flex-direction: column; align-items: center; overflow: hidden; }
.hgrip { flex: none; margin-top: 5px; width: 26px; height: 3px; background: repeating-linear-gradient(90deg, #9a9a9a 0 2px, transparent 2px 5px); }
.sic { width: 32px; height: 32px; flex: none; display: block; }
.sic.tall { width: 36px; height: 40px; }
.hsep { flex: none; width: 42px; height: 1px; background: #bdbdbd; box-shadow: 0 1px 0 #f4f4f4; }
.mt-6 { margin-top: 6px; } .mt-8 { margin-top: 8px; } .mt-9 { margin-top: 9px; } .mt-10 { margin-top: 10px; } .mt-11 { margin-top: 11px; } .mt-12 { margin-top: 12px; } .mt-13 { margin-top: 13px; }

/* drawing */
.canvas { flex: 1; background: #fff; min-width: 0; }
.drawing { display: block; }
.thick path, .thick circle { fill: none; stroke: #111; stroke-width: 2.500; }
.thin path { fill: none; stroke: #222; stroke-width: 1.300; }
.fade { fill: none; stroke: #555; stroke-width: 2; }
.dashy { stroke: #666; stroke-dasharray: 10 7; }
.dimline { fill: none; stroke: #666; stroke-width: 1.600; }
.dim108 { font: 300 30px "Open Sans", sans-serif; fill: #222; }
.redarrow { fill: #f43636; }
.cross { fill: none; stroke: #e6b888; stroke-width: 1.600; }

/* dialog */
.dialog { position: absolute; left: 106px; top: 1px; width: 446px; height: 338px; display: flex; flex-direction: column; background: #f0f0f0; border-radius: 0 0 8px 8px; box-shadow: 1px 1px 2px rgba(0,0,0,.35); }
.d-title { height: 28px; flex: none; position: relative; display: flex; align-items: center; background: linear-gradient(#6e6e6e 0, #333 8px, #1a1a1a 14px, #050505 100%); }
.d-gear { flex: none; margin-left: 5px; }
.d-name { flex: 1; margin-left: 5px; font: 700 19px "Noto Sans CJK SC", sans-serif; letter-spacing: 4.500px; color: #f4f4f4; border-left: 2px solid #555; padding-left: 10px; line-height: 28px; }
.d-act { flex: none; border-left: 1px solid #666; }
.d-arrow { position: absolute; left: 156px; top: 12px; }
.d-main { flex: 1; display: flex; flex-direction: column; min-height: 0; background: linear-gradient(#fafafa, #e2e2e2); padding: 6px 10px 0; border-left: 1px solid #bbb; border-right: 1px solid #bbb; }
.panel { border: 1px solid #9e9e9e; border-top: 0; background: #cdcdcd; }
.p-head { height: 33px; display: flex; align-items: center; background: linear-gradient(#fdfdfd, #e0e0e0); border-bottom: 1px solid #8e8e8e; }
.p-title { flex: 1; padding-left: 7px; font-size: 17.500px; font-weight: 700; color: #222; }
.p-fold { width: 32px; height: 100%; flex: none; display: flex; align-items: center; justify-content: center; border-left: 1px solid #aaa; }
.p-body { padding: 10px 12px 15px 10px; display: flex; flex-direction: column; }
.combo { height: 33px; display: flex; border: 1px solid #8a8a8a; border-radius: 5px; overflow: hidden; background: #eee; padding: 2px 0 2px 2px; }
.combo-val { flex: 1; background: #3399ff; outline: 1px dotted #123; outline-offset: -1px; display: flex; align-items: center; color: #fff; font-size: 16.500px; gap: 5px; padding-left: 3px; }
.lift { padding-bottom: 2px; }
.combo-btn { width: 25px; flex: none; margin: -2px 0; display: flex; align-items: center; justify-content: center; background: linear-gradient(#e6f0fb, #8ab8ea 45%, #3e88d8); border-left: 1px solid #fff; }
.combo-caret { display: block; width: 14px; height: 8px; background: #111; clip-path: polygon(0 0, 100% 0, 50% 100%); }
.row { display: flex; align-items: center; }
.r1 { height: 39px; margin-top: 8px; }
.r2 { height: 40px; margin-top: 8px; }
.r3 { height: 41px; margin-top: 7px; margin-left: -1px; background: linear-gradient(90deg, #eba765 0, #e9b585 45%, #d8c8b8 80%, #cdcdcd 92%); border-radius: 7px; }
.chk { margin-left: 2px; flex: none; }
.r-label { flex: 1; margin-left: 7px; font-size: 16.500px; color: #1c1c1c; padding-bottom: 2px; }
.cnt { font-weight: 700; color: #445; font-family: "Liberation Sans", sans-serif; font-size: 17px; margin-left: 2px; }
.sq { flex: none; width: 42px; height: 39px; display: flex; align-items: center; justify-content: center; border: 1px solid #777; border-radius: 4px; background: linear-gradient(#fbfbfb, #cfcfcf); }
.split { flex: none; width: 65px; height: 40px; display: flex; border: 1px solid #777; border-radius: 4px; overflow: hidden; }
.split-a { flex: 1; display: flex; align-items: center; justify-content: center; background: linear-gradient(#fafafa, #cfcfcf); }
.split-b { width: 21px; flex: none; display: flex; align-items: center; justify-content: center; background: linear-gradient(#e0ecf8, #6ea4e0 50%, #3a7cd0); border-left: 1px solid #fff; }
.split-b .combo-caret { width: 12px; height: 7px; }
.star { color: #d42020; font: 700 24px "Liberation Sans", sans-serif; margin-left: 9px; line-height: 24px; width: 13px; margin-top: -3px; flex: none; }
.r3 .r-label { margin-left: 6px; }
.hot { width: 42px; height: 41px; background: linear-gradient(#ffcb9a, #ff9a4a 55%, #fa8a30); }
.d-rule { height: 1px; margin-top: 5px; background: #c8c8c8; box-shadow: 0 1px 0 #fff; }
.d-foot { display: flex; justify-content: flex-end; gap: 10px; padding: 7px 14px 0 0; }
.btn { width: 73px; height: 30px; padding: 0 0 2px; font: 16px "Noto Sans CJK SC", sans-serif; border-radius: 4px; background: linear-gradient(#f8f8f8, #dcdcdc); }
.btn.off { border: 2px solid #c4c4c4; color: #9a9a9a; }
.btn.def { border: 2px solid #6e6e6e; color: #111; }
.d-bottom { height: 12px; flex: none; background: linear-gradient(#555 0, #111 4px, #0a0a0a); border-radius: 0 0 8px 8px; }
.pointer { position: absolute; left: 391px; top: 318px; filter: drop-shadow(1px 2px 1px rgba(0,0,0,.4)); }
```
